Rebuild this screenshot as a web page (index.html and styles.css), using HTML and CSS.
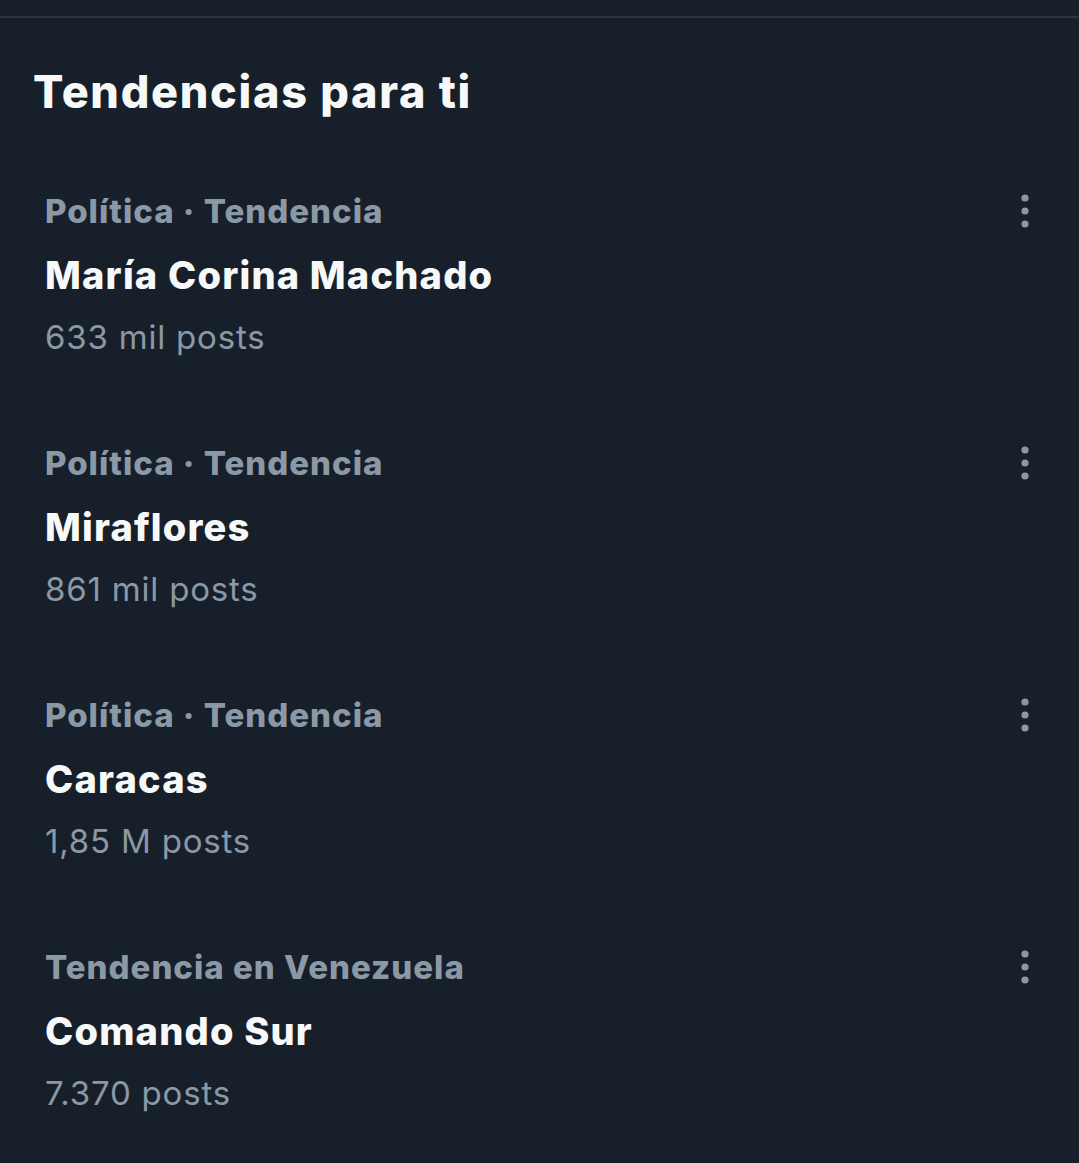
FILE: index.html
```html
<!DOCTYPE html>
<html lang="es">
<head>
    <meta charset="UTF-8">
    <meta name="viewport" content="width=device-width, initial-scale=1.0">
    <title>Tendencias para ti</title>
    <link rel="stylesheet" href="styles.css">
</head>
<body>
    <div class="topbar"></div>
    <h1>Tendencias para ti</h1>

    <div class="trend">
        <div class="trend-head">
            <span class="trend-cat">Política · Tendencia</span>
            <svg class="more" viewBox="0 0 10 34" width="10" height="34"><circle cx="5" cy="4" r="3.6"/><circle cx="5" cy="17" r="3.6"/><circle cx="5" cy="30" r="3.6"/></svg>
        </div>
        <div class="trend-name">María Corina Machado</div>
        <div class="trend-count">633 mil posts</div>
    </div>

    <div class="trend">
        <div class="trend-head">
            <span class="trend-cat">Política · Tendencia</span>
            <svg class="more" viewBox="0 0 10 34" width="10" height="34"><circle cx="5" cy="4" r="3.6"/><circle cx="5" cy="17" r="3.6"/><circle cx="5" cy="30" r="3.6"/></svg>
        </div>
        <div class="trend-name">Miraflores</div>
        <div class="trend-count">861 mil posts</div>
    </div>

    <div class="trend">
        <div class="trend-head">
            <span class="trend-cat">Política · Tendencia</span>
            <svg class="more" viewBox="0 0 10 34" width="10" height="34"><circle cx="5" cy="4" r="3.6"/><circle cx="5" cy="17" r="3.6"/><circle cx="5" cy="30" r="3.6"/></svg>
        </div>
        <div class="trend-name">Caracas</div>
        <div class="trend-count">1,85 M posts</div>
    </div>

    <div class="trend">
        <div class="trend-head">
            <span class="trend-cat">Tendencia en Venezuela</span>
            <svg class="more" viewBox="0 0 10 34" width="10" height="34"><circle cx="5" cy="4" r="3.6"/><circle cx="5" cy="17" r="3.6"/><circle cx="5" cy="30" r="3.6"/></svg>
        </div>
        <div class="trend-name">Comando Sur</div>
        <div class="trend-count">7.370 posts</div>
    </div>
</body>
</html>
```

FILE: styles.css
```css
body {
    margin: 0;
    background: #17202a;
    font-family: 'Inter', 'Liberation Sans', sans-serif;
    color: #f7f9f9;
    min-height: 1163px;
}
.topbar {
    height: 16px;
    border-bottom: 2px solid #2c3640;
}
h1 {
    margin: 46px 0 0 33px;
    font-size: 45px;
    line-height: 56px;
    font-weight: 800;
    letter-spacing: 1.7px;
}
.trend {
    padding: 0 49px 0 45px;
    margin-top: 28px;
    height: 252px;
    box-sizing: border-box;
    padding-top: 41px;
}
.trend + .trend {
    margin-top: 0;
}
.trend-head {
    display: flex;
    justify-content: space-between;
    align-items: flex-start;
    height: 44px;
}
.trend-cat {
    font-size: 33px;
    line-height: 44px;
    font-weight: 800;
    color: #8b98a5;
    letter-spacing: 1px;
}
.more {
    fill: #8b98a5;
    margin-top: 5px;
}
.trend-name {
    margin-top: 14px;
    font-size: 38px;
    line-height: 56px;
    font-weight: 800;
    letter-spacing: 1.2px;
}
.trend-count {
    margin-top: 12px;
    font-size: 33px;
    line-height: 44px;
    color: #8b98a5;
    letter-spacing: 0.8px;
}
```
